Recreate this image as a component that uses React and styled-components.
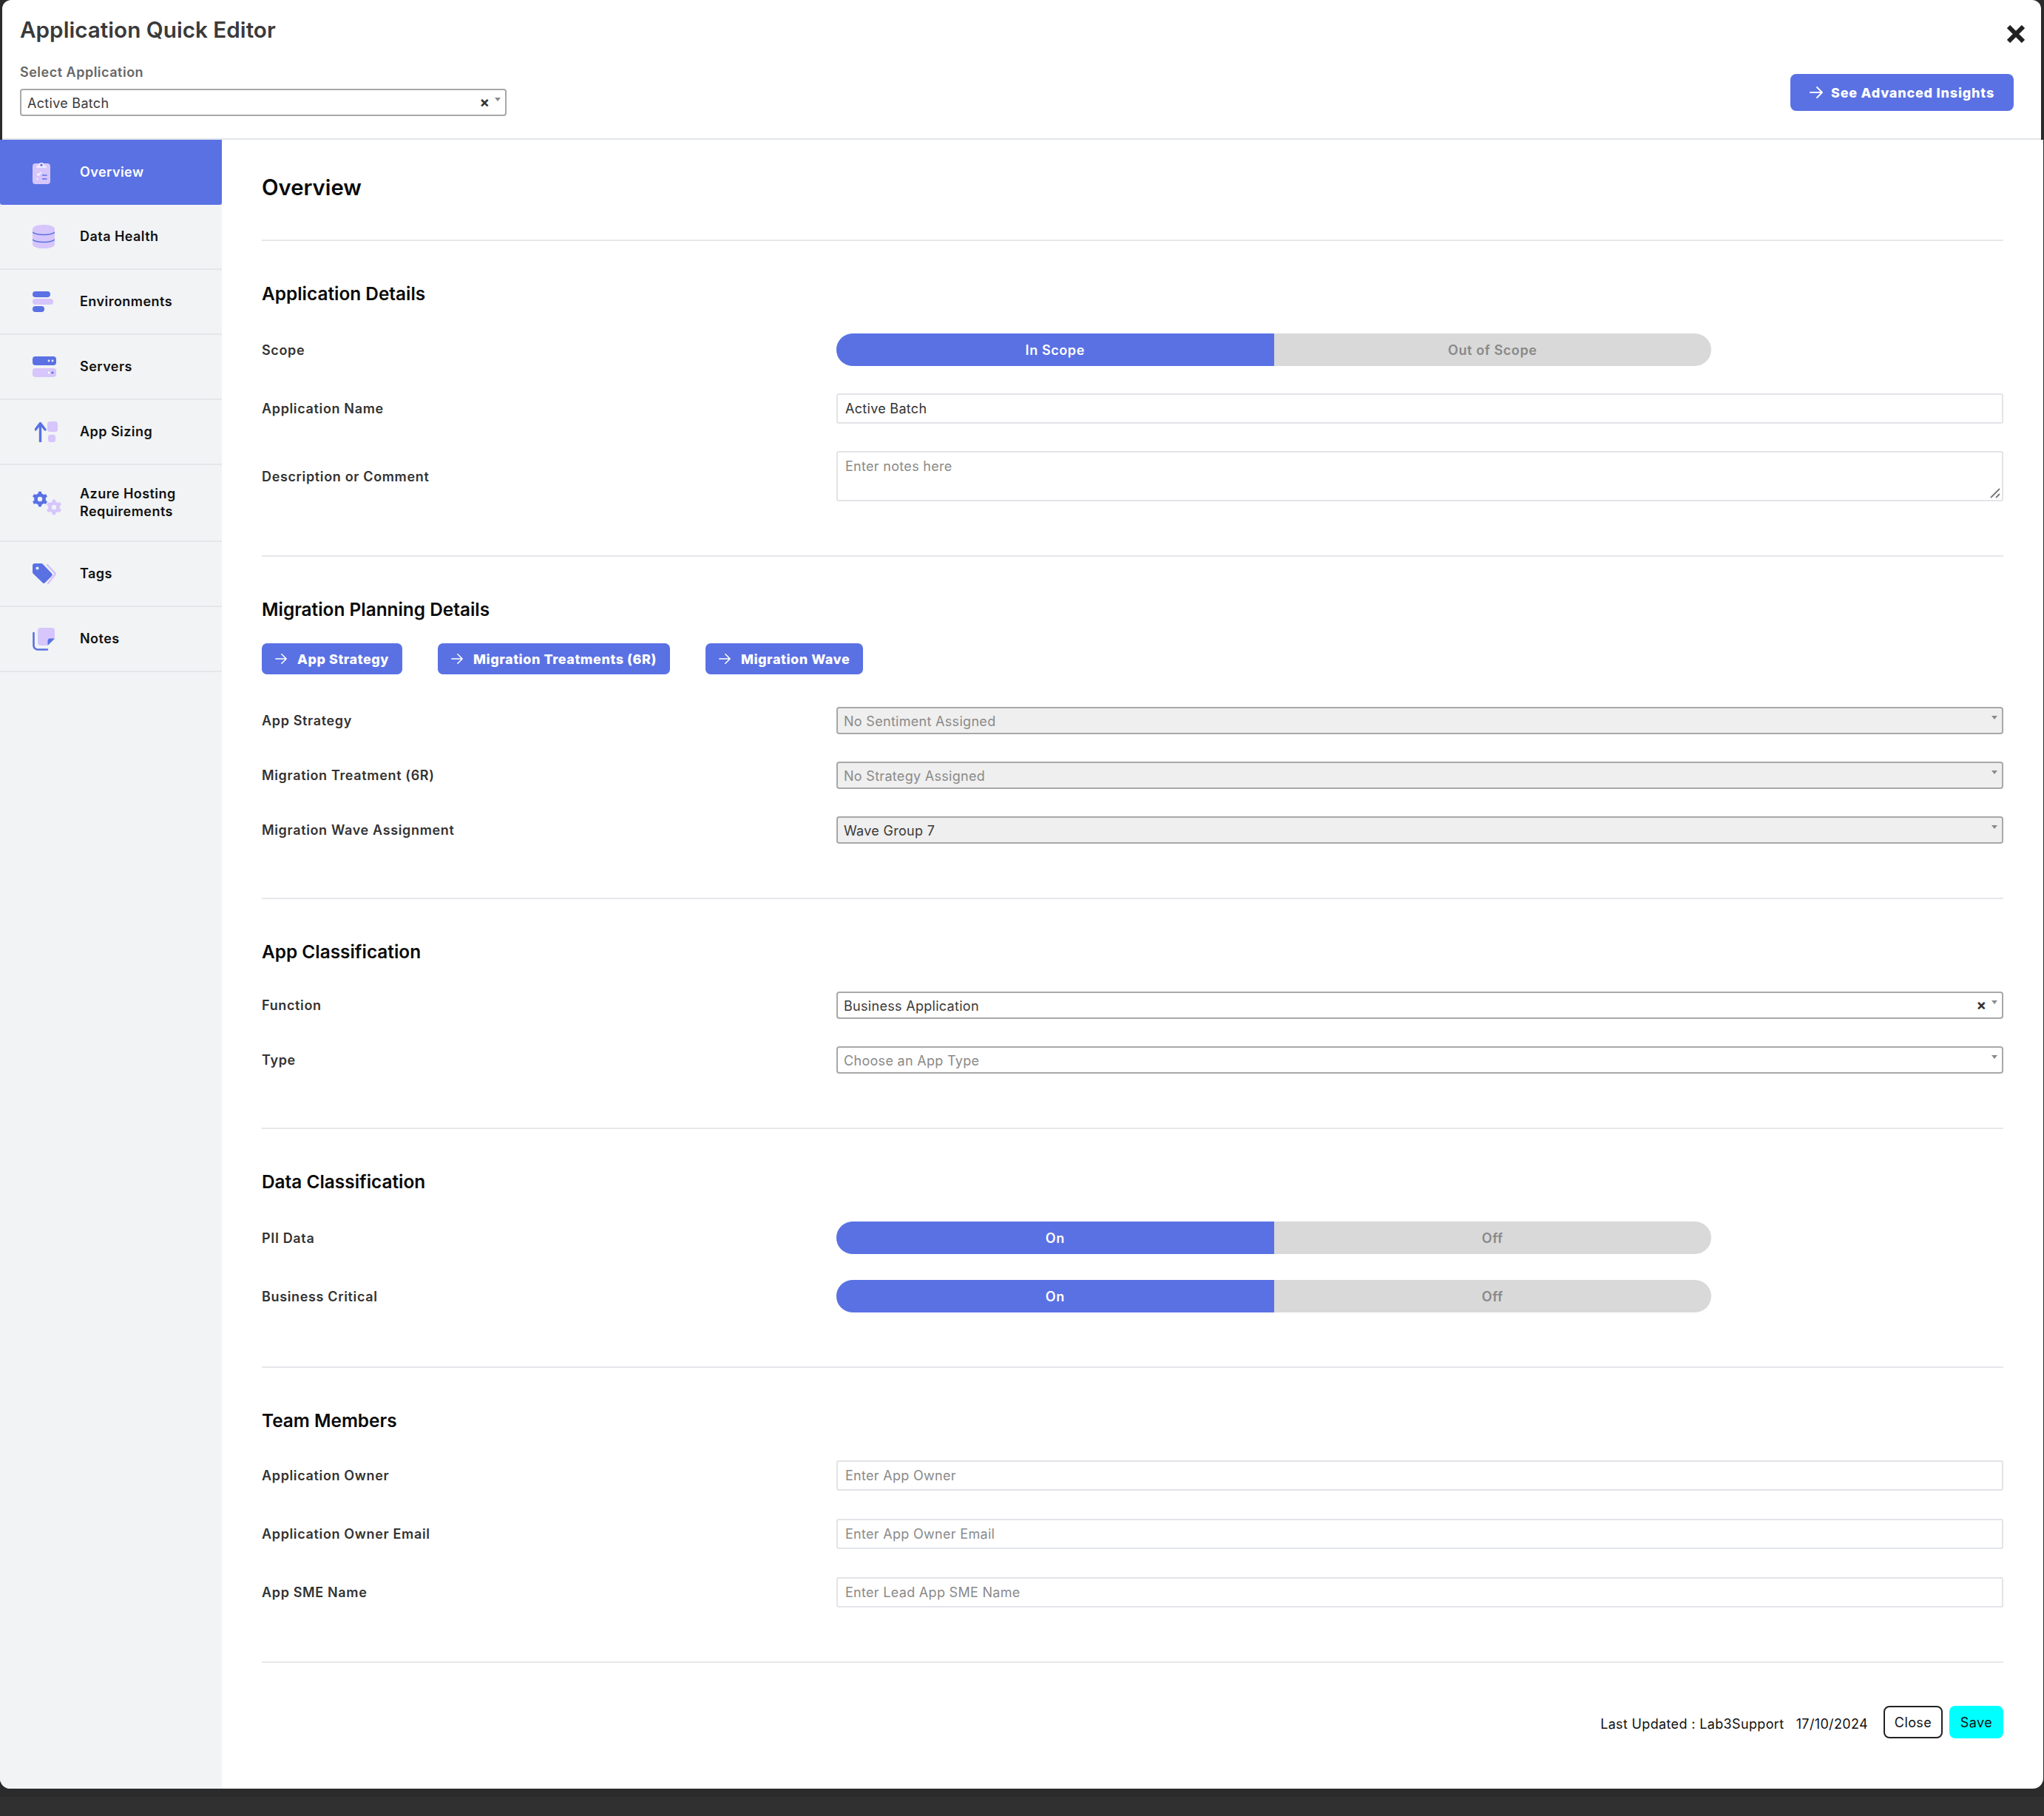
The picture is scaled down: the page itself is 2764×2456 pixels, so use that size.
import React from "react";
import styled, { createGlobalStyle } from "styled-components";

const Global = createGlobalStyle`
  html, body { margin: 0; padding: 0; background: #2e2e2e; }
  * { box-sizing: border-box; }
`;

const BLUE = "#5a71e4";
const LILAC = "#d6c6fb";
const FONT = `Inter, "Noto Sans", "Liberation Sans", sans-serif`;

const Page = styled.div`
  width: 2764px;
  height: 2456px;
  overflow: hidden;
  background: linear-gradient(#2b2b2b 2430px, #303030 2430px);
  font-family: ${FONT};
  color: #333;
`;
const Header = styled.header`
  height: 189px;
  margin: 0 4px 0 3px;
  padding: 0 37px 0 24px;
  background: #fff;
  border-radius: 12px 12px 0 0;
  border-bottom: 2px solid #e2e6ea;
  display: flex;
  justify-content: space-between;
`;
const HeaderLeft = styled.div`
  display: flex;
  flex-direction: column;
  padding-top: 20px;
`;
const HeaderRight = styled.div`
  display: flex;
  flex-direction: column;
  align-items: flex-end;
  padding-top: 34px;
`;
const Title = styled.h1`
  margin: 0;
  font-size: 29.7px;
  line-height: 40px;
  font-weight: 600;
  color: #3a3a3a;
`;
const SelectLabel = styled.div`
  margin-top: 27px;
  font-size: 18px;
  line-height: 22px;
  font-weight: 600;
  letter-spacing: 0.5px;
  color: #666;
`;
const CloseIcon = styled.svg`
  display: block;
  width: 24px;
  height: 24px;
  margin-right: -15px;
`;
const InsightsButton = styled.button`
  margin-top: 42px;
  width: 302px;
  height: 50px;
  border: 0;
  border-radius: 8px;
  background: ${BLUE};
  color: #fff;
  display: flex;
  align-items: center;
  justify-content: center;
  gap: 11px;
  font-family: ${FONT};
  font-size: 18px;
  font-weight: 800;
  letter-spacing: 0.8px;
`;
const Body = styled.div`
  display: flex;
  height: 2230px;
  margin-right: 1px;
  background: #fff;
  border-radius: 0 0 14px 14px;
  overflow: hidden;
`;
const Sidebar = styled.nav`
  flex: 0 0 300px;
  background: #f1f3f5;
`;
const NavItem = styled.div`
  display: flex;
  align-items: center;
  height: ${(p) => p.$h || 88}px;
  padding-left: 44px;
  background: ${(p) => (p.$active ? BLUE : "transparent")};
  border-bottom: ${(p) => (p.$active ? "0" : "2px solid #e4e7ea")};
  border-radius: ${(p) => (p.$active ? "0 0 3px 3px" : "0")};
  color: ${(p) => (p.$active ? "#fff" : "#111")};
`;
const NavIconBox = styled.span`
  flex: 0 0 64px;
  display: flex;
  align-items: center;
`;
const NavText = styled.span`
  font-size: 18px;
  line-height: 24px;
  font-weight: 600;
  letter-spacing: 0.45px;
`;
const Main = styled.main`
  flex: 1;
  padding: 0 54px;
  display: flex;
  flex-direction: column;
`;
const PageHead = styled.div`
  height: 137px;
  padding-top: 45px;
  border-bottom: 2px solid #e5e7ea;
`;
const PageTitle = styled.h2`
  margin: 0;
  font-size: 29.3px;
  line-height: 40px;
  font-weight: 600;
  color: #0a0a0a;
`;
const Section = styled.section`
  padding: 56px 0 73px;
  border-bottom: 2px solid #e5e7ea;
`;
const SectionTitle = styled.h3`
  margin: 0;
  font-size: 24.4px;
  line-height: 30px;
  font-weight: 600;
  color: #0a0a0a;
`;
const Fields = styled.div`
  display: flex;
  flex-direction: column;
  gap: ${(p) => p.$gap || 37}px;
  margin-top: ${(p) => p.$top || 39}px;
`;
const Row = styled.div`
  display: grid;
  grid-template-columns: 777px 1fr;
  align-items: center;
`;
const Label = styled.label`
  padding-top: 1px;
  font-size: 18px;
  line-height: 24px;
  font-weight: 600;
  letter-spacing: 0.65px;
  color: #333;
`;
const Toggle = styled.div`
  width: 1183px;
  height: 44px;
  display: grid;
  grid-template-columns: 1fr 1fr;
  border-radius: 22px;
  overflow: hidden;
  background: #d9d9d9;
`;
const ToggleSide = styled.div`
  display: flex;
  align-items: center;
  justify-content: center;
  font-size: 18px;
  font-weight: 600;
  letter-spacing: 0.6px;
  background: ${(p) => (p.$on ? BLUE : "transparent")};
  color: ${(p) => (p.$on ? "#fff" : "#888")};
`;
const TextInput = styled.input`
  display: block;
  width: 100%;
  height: 41px;
  padding: 0 10px;
  border: 2px solid #e2e4e8;
  border-radius: 3px;
  outline: 0;
  background: #fff;
  font-family: ${FONT};
  font-size: 18px;
  letter-spacing: 0.3px;
  color: #333;
  &::placeholder { color: #8a8a8a; opacity: 1; }
`;
const AreaWrap = styled.div`
  position: relative;
`;
const TextArea = styled.textarea`
  display: block;
  width: 100%;
  height: 68px;
  padding: 8px 10px;
  border: 2px solid #e2e4e8;
  border-radius: 3px;
  outline: 0;
  resize: none;
  background: #fff;
  font-family: ${FONT};
  font-size: 18px;
  line-height: 22px;
  letter-spacing: 0.3px;
  color: #333;
  &::placeholder { color: #8a8a8a; opacity: 1; }
`;
const Grip = styled.svg`
  position: absolute;
  right: 4px;
  bottom: 4px;
  width: 14px;
  height: 14px;
`;
const SelectBox = styled.div`
  position: relative;
  display: flex;
  align-items: center;
  width: ${(p) => p.$w || "100%"};
  height: 37px;
  margin-top: ${(p) => p.$mt || 0}px;
  padding: 2px 8px 0;
  border: 2px solid #a8a8a8;
  border-radius: 4px;
  background: ${(p) => (p.$disabled ? "#efefef" : "#fff")};
  font-size: 18px;
  letter-spacing: 0.3px;
  color: ${(p) => (p.$muted ? "#8a8a8a" : "#3a3a3a")};
`;
const Caret = styled.span`
  position: absolute;
  right: 6px;
  top: 10px;
  width: 0;
  height: 0;
  border-left: 4px solid transparent;
  border-right: 4px solid transparent;
  border-top: 5px solid #8a8a8a;
`;
const Clear = styled.span`
  position: absolute;
  right: 21px;
  top: 3px;
  font-size: 20px;
  line-height: 26px;
  font-weight: 700;
  letter-spacing: 0;
  color: #333;
`;
const ActionBar = styled.div`
  display: flex;
  gap: 48px;
  margin-top: 31px;
`;
const ActionButton = styled.button`
  height: 42px;
  padding: 0 18px;
  border: 0;
  border-radius: 7px;
  background: ${BLUE};
  color: #fff;
  display: flex;
  align-items: center;
  gap: 14px;
  font-family: ${FONT};
  font-size: 18px;
  font-weight: 800;
  letter-spacing: 0.55px;
`;
const ArrowIcon = styled.svg`
  flex: none;
  width: ${(p) => p.$s || 18}px;
  height: ${(p) => p.$s || 18}px;
`;
const Footer = styled.footer`
  display: flex;
  justify-content: flex-end;
  align-items: center;
  padding-top: 58px;
  font-size: 18px;
  letter-spacing: 0.35px;
  color: #111;
`;
const FooterText = styled.span`
  margin: 4px 21px 0 0;
  white-space: pre;
`;
const FooterBtn = styled.button`
  height: 44px;
  padding: 0;
  width: ${(p) => p.$w}px;
  margin-left: ${(p) => p.$ml || 0}px;
  border: ${(p) => (p.$primary ? "0" : "2px solid #222")};
  border-radius: 8px;
  background: ${(p) => (p.$primary ? "#00ffff" : "#fff")};
  color: #111;
  font-family: ${FONT};
  font-size: 18px;
  letter-spacing: 0.4px;
`;

const gear = (cx, cy, R, r, hole, n = 6) => {
  let d = "";
  const step = (Math.PI * 2) / n;
  for (let i = 0; i < n; i++) {
    const a = i * step - Math.PI / 2;
    const pts = [
      [a - step * 0.3, r],
      [a - step * 0.17, R],
      [a + step * 0.17, R],
      [a + step * 0.3, r],
    ];
    pts.forEach(([t, q], j) => {
      const x = (cx + q * Math.cos(t)).toFixed(2);
      const y = (cy + q * Math.sin(t)).toFixed(2);
      d += `${i === 0 && j === 0 ? "M" : "L"}${x} ${y} `;
    });
  }
  d += `Z M${cx - hole} ${cy} a${hole} ${hole} 0 1 0 ${hole * 2} 0 a${hole} ${hole} 0 1 0 ${-hole * 2} 0 Z`;
  return d;
};

const Icons = {
  overview: (
    <svg width="24" height="32" viewBox="0 0 24 32">
      <rect x="0" y="4" width="24" height="28" rx="4" fill={LILAC} />
      <path d="M5 9 a2 2 0 0 1 2-2 h1 a4 4 0 0 1 8 0 h1 a2 2 0 0 1 2 2 v1 H5z" fill="#efe9ff" />
      <circle cx="12" cy="6.2" r="1.6" fill={BLUE} />
      <path d="M6 18 l2 2 l3.5-4" stroke="#fff" strokeWidth="1.3" fill="none" />
      <path d="M13 20 h6.5 M13 25 h6.5" stroke={BLUE} strokeWidth="1.6" />
      <circle cx="6.5" cy="25" r="1" fill="#fff" />
    </svg>
  ),
  data: (
    <svg width="30" height="32" viewBox="0 0 30 32">
      <path d="M0 6 C0 2 7 0 15 0 S30 2 30 6 V26 C30 30 23 32 15 32 S0 30 0 26Z" fill={LILAC} />
      <path d="M0 10 C4 14.5 26 14.5 30 10 M0 20 C4 24.5 26 24.5 30 20" stroke={BLUE} strokeWidth="1.5" fill="none" />
    </svg>
  ),
  env: (
    <svg width="29" height="28" viewBox="0 0 29 28">
      <rect x="0" y="0" width="24" height="8" rx="4" fill={BLUE} />
      <rect x="0" y="10" width="28" height="8" rx="4" fill={LILAC} />
      <rect x="0" y="20" width="16" height="8" rx="4" fill={BLUE} />
    </svg>
  ),
  servers: (
    <svg width="33" height="28" viewBox="0 0 33 28">
      <rect x="0" y="0" width="32" height="12" rx="4" fill={BLUE} />
      <rect x="0" y="16" width="32" height="12" rx="4" fill={LILAC} />
      <circle cx="22" cy="6" r="1.4" fill="#eee" />
      <circle cx="27" cy="6" r="1.4" fill="#eee" />
      <circle cx="22" cy="22" r="1.4" fill="#fff" />
      <circle cx="27" cy="22" r="1.6" fill={BLUE} />
    </svg>
  ),
  sizing: (
    <svg width="32" height="28" viewBox="0 0 32 28" style={{ marginLeft: 3 }}>
      <path d="M7.5 27 V3 M1 11 L7.5 2.5 L14 11" stroke={BLUE} strokeWidth="3.4" fill="none" strokeLinecap="round" strokeLinejoin="round" />
      <rect x="17" y="0" width="14" height="14" rx="3.5" fill={LILAC} />
      <rect x="18" y="18" width="10" height="10" rx="3" fill={LILAC} />
    </svg>
  ),
  azure: (
    <svg width="41" height="33" viewBox="0 0 41 33">
      <path d={gear(10, 11, 10.5, 8, 3.2)} fill={BLUE} fillRule="evenodd" />
      <path d={gear(29, 22, 10.5, 8, 3.2)} fill={LILAC} fillRule="evenodd" />
    </svg>
  ),
  tags: (
    <svg width="32" height="29" viewBox="0 0 32 29">
      <path d="M20 2 L31 14 L21 27" stroke={LILAC} strokeWidth="2.6" fill="none" strokeLinejoin="round" strokeLinecap="round" />
      <path d="M3 0 H12 a3 3 0 0 1 2 1 L26 13.5 a2.5 2.5 0 0 1 0 3.5 L17 26 a2.5 2.5 0 0 1-3.5 0 L1 14 a3 3 0 0 1-1-2 V3 a3 3 0 0 1 3-3Z" fill={BLUE} />
      <circle cx="6.5" cy="6.5" r="2" fill="#f1f3f5" />
    </svg>
  ),
  notes: (
    <svg width="31" height="31" viewBox="0 0 31 31">
      <path d="M1.5 7 V24 a5.5 5.5 0 0 0 5.5 5.5 H20" stroke={BLUE} strokeWidth="2.6" fill="none" strokeLinecap="round" />
      <path d="M11 0 H26 a4 4 0 0 1 4 4 V15 L19 24 H11 a4 4 0 0 1-4-4 V4 a4 4 0 0 1 4-4Z" fill={LILAC} />
      <path d="M30 14.5 L20.5 24 V18 a3 3 0 0 1 3-3.5Z" fill={BLUE} />
    </svg>
  ),
};

const Arrow = ({ s }) => (
  <ArrowIcon $s={s} viewBox="0 0 18 18" fill="none" stroke="#fff" strokeWidth="1.8" strokeLinecap="round" strokeLinejoin="round">
    <path d="M1 9 H17 M10 2 L17 9 L10 16" />
  </ArrowIcon>
);

const NAV = [
  ["overview", "Overview"],
  ["data", "Data Health"],
  ["env", "Environments"],
  ["servers", "Servers"],
  ["sizing", "App Sizing"],
  ["azure", "Azure Hosting Requirements"],
  ["tags", "Tags"],
  ["notes", "Notes"],
];

const Select = ({ value, disabled, muted, clear, w, mt }) => (
  <SelectBox $disabled={disabled} $muted={muted} $w={w} $mt={mt}>
    {value}
    {clear && <Clear>×</Clear>}
    <Caret />
  </SelectBox>
);

const Switch = ({ on, off }) => (
  <Toggle>
    <ToggleSide $on>{on}</ToggleSide>
    <ToggleSide>{off}</ToggleSide>
  </Toggle>
);

export default function App() {
  return (
    <Page>
      <Global />
      <Header>
        <HeaderLeft>
          <Title>Application Quick Editor</Title>
          <SelectLabel>Select Application</SelectLabel>
          <Select value="Active Batch" clear w="658px" mt={11} />
        </HeaderLeft>
        <HeaderRight>
          <CloseIcon viewBox="0 0 24 24" fill="none" stroke="#222" strokeWidth="6">
            <path d="M2 2 L22 22 M22 2 L2 22" />
          </CloseIcon>
          <InsightsButton>
            <Arrow s={18} />
            See Advanced Insights
          </InsightsButton>
        </HeaderRight>
      </Header>
      <Body>
        <Sidebar>
          {NAV.map(([k, t], i) => (
            <NavItem key={k} $active={i === 0} $h={k === "azure" ? 104 : 88}>
              <NavIconBox>{Icons[k]}</NavIconBox>
              <NavText>{k === "azure" ? <>Azure Hosting<br />Requirements</> : t}</NavText>
            </NavItem>
          ))}
        </Sidebar>
        <Main>
          <PageHead>
            <PageTitle>Overview</PageTitle>
          </PageHead>
          <Section>
            <SectionTitle>Application Details</SectionTitle>
            <Fields>
              <Row>
                <Label>Scope</Label>
                <Switch on="In Scope" off="Out of Scope" />
              </Row>
              <Row>
                <Label>Application Name</Label>
                <TextInput readOnly value="Active Batch" />
              </Row>
              <Row>
                <Label>Description or Comment</Label>
                <AreaWrap>
                  <TextArea readOnly placeholder="Enter notes here" />
                  <Grip viewBox="0 0 14 14" stroke="#777" strokeWidth="1.8">
                    <path d="M1 13 L13 1 M8 13 L13 8" />
                  </Grip>
                </AreaWrap>
              </Row>
            </Fields>
          </Section>
          <Section>
            <SectionTitle>Migration Planning Details</SectionTitle>
            <ActionBar>
              <ActionButton><Arrow s={16} />App Strategy</ActionButton>
              <ActionButton><Arrow s={16} />Migration Treatments (6R)</ActionButton>
              <ActionButton><Arrow s={16} />Migration Wave</ActionButton>
            </ActionBar>
            <Fields $top={44}>
              <Row>
                <Label>App Strategy</Label>
                <Select value="No Sentiment Assigned" disabled muted />
              </Row>
              <Row>
                <Label>Migration Treatment (6R)</Label>
                <Select value="No Strategy Assigned" disabled muted />
              </Row>
              <Row>
                <Label>Migration Wave Assignment</Label>
                <Select value="Wave Group 7" disabled />
              </Row>
            </Fields>
          </Section>
          <Section>
            <SectionTitle>App Classification</SectionTitle>
            <Fields>
              <Row>
                <Label>Function</Label>
                <Select value="Business Application" clear />
              </Row>
              <Row>
                <Label>Type</Label>
                <Select value="Choose an App Type" muted />
              </Row>
            </Fields>
          </Section>
          <Section>
            <SectionTitle>Data Classification</SectionTitle>
            <Fields $gap={35}>
              <Row>
                <Label>PII Data</Label>
                <Switch on="On" off="Off" />
              </Row>
              <Row>
                <Label>Business Critical</Label>
                <Switch on="On" off="Off" />
              </Row>
            </Fields>
          </Section>
          <Section>
            <SectionTitle>Team Members</SectionTitle>
            <Fields $gap={38}>
              <Row>
                <Label>Application Owner</Label>
                <TextInput readOnly placeholder="Enter App Owner" />
              </Row>
              <Row>
                <Label>Application Owner Email</Label>
                <TextInput readOnly placeholder="Enter App Owner Email" />
              </Row>
              <Row>
                <Label>App SME Name</Label>
                <TextInput readOnly placeholder="Enter Lead App SME Name" />
              </Row>
            </Fields>
          </Section>
          <Footer>
            <FooterText>{"Last Updated : Lab3Support   17/10/2024"}</FooterText>
            <FooterBtn $w={80}>Close</FooterBtn>
            <FooterBtn $w={73} $ml={9} $primary>Save</FooterBtn>
          </Footer>
        </Main>
      </Body>
    </Page>
  );
}
